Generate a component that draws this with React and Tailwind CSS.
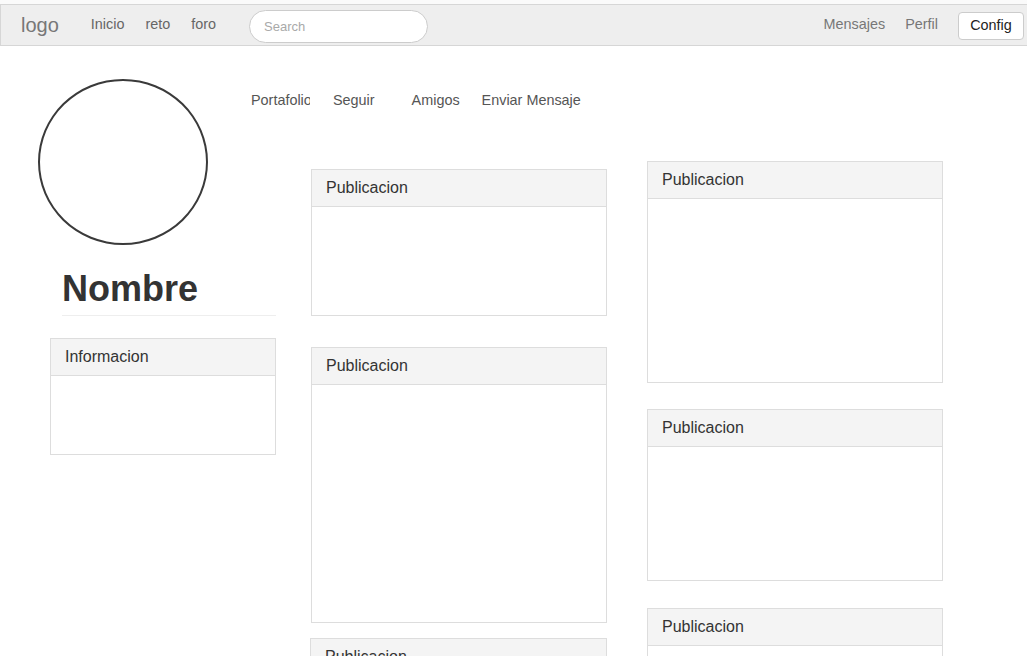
import React from 'react';

const Panel = ({ title, className = '', bodyHeight }) => (
    <div className={`border border-[#dddddd] bg-white ${className}`}>
        <div className="h-[37px] bg-[#f4f4f4] border-b border-[#dddddd] px-[14px] flex items-center text-[16px] text-[#333]">
            {title}
        </div>
        <div style={{ height: bodyHeight }} />
    </div>
);

const App = () => {
    const links = ['Inicio', 'reto', 'foro'];

    return (
        <div className="min-h-[656px] bg-white overflow-hidden font-['Liberation_Sans',Arial,sans-serif]">
            <div className="h-[4px] bg-[#fafafa]" />

            {/* navbar */}
            <nav className="h-[42px] bg-[#eeeeee] border-y border-l border-[#d6d6d6] flex items-center">
                <span className="ml-[20px] text-[20px] text-[#777]">logo</span>
                <ul className="flex items-center ml-[32px] gap-[21px] text-[14.4px] text-[#666]">
                    {links.map((l) => (
                        <li key={l}>{l}</li>
                    ))}
                </ul>
                <div className="ml-[33px] w-[179px] h-[33px] mt-[3px] rounded-full border border-[#cccccc] bg-white flex items-center pl-[14px] text-[13px] text-[#a9a9a9]">
                    Search
                </div>
                <div className="ml-auto flex items-center text-[14.4px] text-[#777]">
                    <span>Mensajes</span>
                    <span className="ml-[20px]">Perfil</span>
                    <button className="ml-[20px] mr-[3px] mt-[2px] w-[66px] h-[28px] bg-white border border-[#cccccc] rounded-[4px] text-[14.4px] text-[#222]">
                        Config
                    </button>
                </div>
            </nav>

            <div className="flex">
                {/* profile column */}
                <aside className="w-[276px] shrink-0">
                    <div className="ml-[38px] mt-[33px] w-[170px] h-[166px] rounded-[50%] border-2 border-[#3a3a3a]" />
                    <h1 className="ml-[62px] mt-[24px] text-[36px] leading-[40px] font-bold text-[#333]">Nombre</h1>
                    <div className="ml-[62px] mt-[6px] border-t border-[#eeeeee]" />
                    <Panel title="Informacion" className="ml-[50px] mt-[22px]" bodyHeight={78} />
                </aside>

                {/* content */}
                <div className="flex-1">
                    <div className="-ml-[25px] mt-[45px] h-[20px] flex items-center text-[14.4px] text-[#555]">
                        <span className="w-[59px] overflow-hidden whitespace-nowrap">Portafolio</span>
                        <span className="ml-[23px]">Seguir</span>
                        <span className="ml-[37px]">Amigos</span>
                        <span className="ml-[22px]">Enviar Mensaje</span>
                    </div>

                    <div className="flex items-start ml-[35px] gap-[40px]">
                        <div className="w-[296px] mt-[58px] flex flex-col">
                            <Panel title="Publicacion" bodyHeight={108} />
                            <Panel title="Publicacion" className="mt-[31px]" bodyHeight={237} />
                            <Panel title="Publicacion" className="mt-[15px] -ml-[1px]" bodyHeight={100} />
                        </div>
                        <div className="w-[296px] mt-[50px] flex flex-col">
                            <Panel title="Publicacion" bodyHeight={183} />
                            <Panel title="Publicacion" className="mt-[26px]" bodyHeight={133} />
                            <Panel title="Publicacion" className="mt-[27px]" bodyHeight={100} />
                        </div>
                    </div>
                </div>
            </div>
        </div>
    );
};

export default App;
